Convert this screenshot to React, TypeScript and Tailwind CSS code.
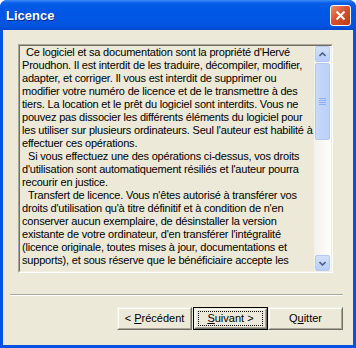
const lines: { text: string; indent?: number }[] = [
  { text: "Ce logiciel et sa documentation sont la propriété d'Hervé", indent: 4 },
  { text: "Proudhon. Il est interdit de les traduire, décompiler, modifier," },
  { text: "adapter, et corriger. Il vous est interdit de supprimer ou" },
  { text: "modifier votre numéro de licence et de le transmettre à des" },
  { text: "tiers. La location et le prêt du logiciel sont interdits. Vous ne" },
  { text: "pouvez pas dissocier les différents éléments du logiciel pour" },
  { text: "les utiliser sur plusieurs ordinateurs. Seul l'auteur est habilité à" },
  { text: "effectuer ces opérations." },
  { text: "Si vous effectuez une des opérations ci-dessus, vos droits", indent: 6 },
  { text: "d'utilisation sont automatiquement résiliés et l'auteur pourra" },
  { text: "recourir en justice." },
  { text: "Transfert de licence. Vous n'êtes autorisé à transférer vos", indent: 6 },
  { text: "droits d'utilisation qu'à titre définitif et à condition de n'en" },
  { text: "conserver aucun exemplaire, de désinstaller la version" },
  { text: "existante de votre ordinateur, d'en transférer l'intégralité" },
  { text: "(licence originale, toutes mises à jour, documentations et" },
  { text: "supports), et sous réserve que le bénéficiaire accepte les" },
];

function ScrollArrow({ up }: { up?: boolean }) {
  return (
    <div className="h-[16px] w-[15px] rounded-[2px] border border-[#b4c8f6] bg-gradient-to-b from-[#d3e0fd] to-[#b9cdfb] flex items-center justify-center">
      <svg width="7" height="5" viewBox="0 0 7 5">
        <path
          d={up ? "M0.5 4 L3.5 1 L6.5 4" : "M0.5 1 L3.5 4 L6.5 1"}
          fill="none"
          stroke="#4d6185"
          strokeWidth="1.6"
        />
      </svg>
    </div>
  );
}

function ClassicButton({
  children,
  isDefault,
  className = "",
}: {
  children: React.ReactNode;
  isDefault?: boolean;
  className?: string;
}) {
  const inner = (
    <div className="h-full border-t border-l border-[#f1efe2] border-r border-b border-r-[#716f64] border-b-[#716f64]">
      <div className="h-full border-t border-l border-white border-r border-b border-r-[#aca899] border-b-[#aca899] flex items-center justify-center">
        {isDefault ? (
          <div className="px-[5px] h-[15px] w-[65px] border border-dotted border-black flex items-center justify-center">
            {children}
          </div>
        ) : (
          children
        )}
      </div>
    </div>
  );
  return (
    <div
      className={`w-[75px] h-[23px] text-[11px] text-black ${
        isDefault ? "border border-black" : ""
      } ${className}`}
    >
      {inner}
    </div>
  );
}

export default function App() {
  return (
    <div className="w-[356px] h-[348px] bg-white font-['Liberation_Sans',Arial,sans-serif]">
      <div className="h-full flex flex-col rounded-t-[7px] overflow-hidden bg-[#0553e1]">
        {/* Title bar */}
        <div className="h-[30px] shrink-0 flex items-center justify-between pl-[6px] pr-[5px] bg-[linear-gradient(to_bottom,#3b8cf5_0px,#0a5fe8_3px,#0058e6_8px,#0256e3_20px,#0353e0_26px,#0148cf_30px)]">
          <span className="text-white font-bold text-[13px] leading-none pt-[1px] [text-shadow:1px_1px_0_#0a2a8c]">
            Licence
          </span>
          <div className="w-[21px] h-[21px] rounded-[3px] border border-white bg-[linear-gradient(135deg,#e98f6f,#d6522f_45%,#c03b14)] flex items-center justify-center">
            <svg width="11" height="11" viewBox="0 0 11 11">
              <path d="M1.5 1.5 L9.5 9.5 M9.5 1.5 L1.5 9.5" stroke="white" strokeWidth="2" />
            </svg>
          </div>
        </div>

        {/* Body */}
        <div className="flex-1 mx-[3px] mb-[3px] bg-[#ece9d8] flex flex-col">
          <div className="ml-[15px] mt-[14px] w-[315px] h-[229px] border-t border-l border-[#aca899] border-r border-b border-r-white border-b-white">
            <div className="h-full border-t border-l border-[#716f64] border-r border-b border-r-[#f1efe2] border-b-[#f1efe2] flex">
              <div className="flex-1 pl-[2px] text-[11px] leading-[13px] tracking-[-0.2px] text-black overflow-hidden">
                {lines.map((l, i) => (
                  <div
                    key={i}
                    className="whitespace-nowrap"
                    style={l.indent ? { paddingLeft: l.indent } : undefined}
                  >
                    {l.text}
                  </div>
                ))}
              </div>
              {/* Scrollbar */}
              <div className="w-[17px] flex flex-col items-center bg-gradient-to-r from-[#f3f1ec] to-[#fefefb]">
                <ScrollArrow up />
                <div className="flex-1 w-full flex flex-col items-center pt-[1px]">
                  <div className="w-[15px] h-[77px] rounded-[2px] border border-[#b4c8f6] bg-gradient-to-r from-[#c9d8fc] to-[#bccffb] flex flex-col items-center justify-center gap-[1px]">
                    <div className="w-[7px] h-px bg-[#8cb0f8]" />
                    <div className="w-[7px] h-px bg-[#8cb0f8]" />
                    <div className="w-[7px] h-px bg-[#8cb0f8]" />
                    <div className="w-[7px] h-px bg-[#8cb0f8]" />
                  </div>
                </div>
                <ScrollArrow />
              </div>
            </div>
          </div>

          <div className="ml-[7px] mr-[10px] mt-[21px] border-t border-[#aca899] border-b border-b-white" />

          <div className="flex justify-end pr-[10px] mt-[11px]">
            <ClassicButton>
              <span>
                &lt; <span className="underline">P</span>récédent
              </span>
            </ClassicButton>
            <ClassicButton isDefault className="ml-[1px]">
              <span>
                <span className="underline">S</span>uivant &gt;
              </span>
            </ClassicButton>
            <ClassicButton>
              <span>
                Q<span className="underline">u</span>itter
              </span>
            </ClassicButton>
          </div>
        </div>
      </div>
    </div>
  );
}
